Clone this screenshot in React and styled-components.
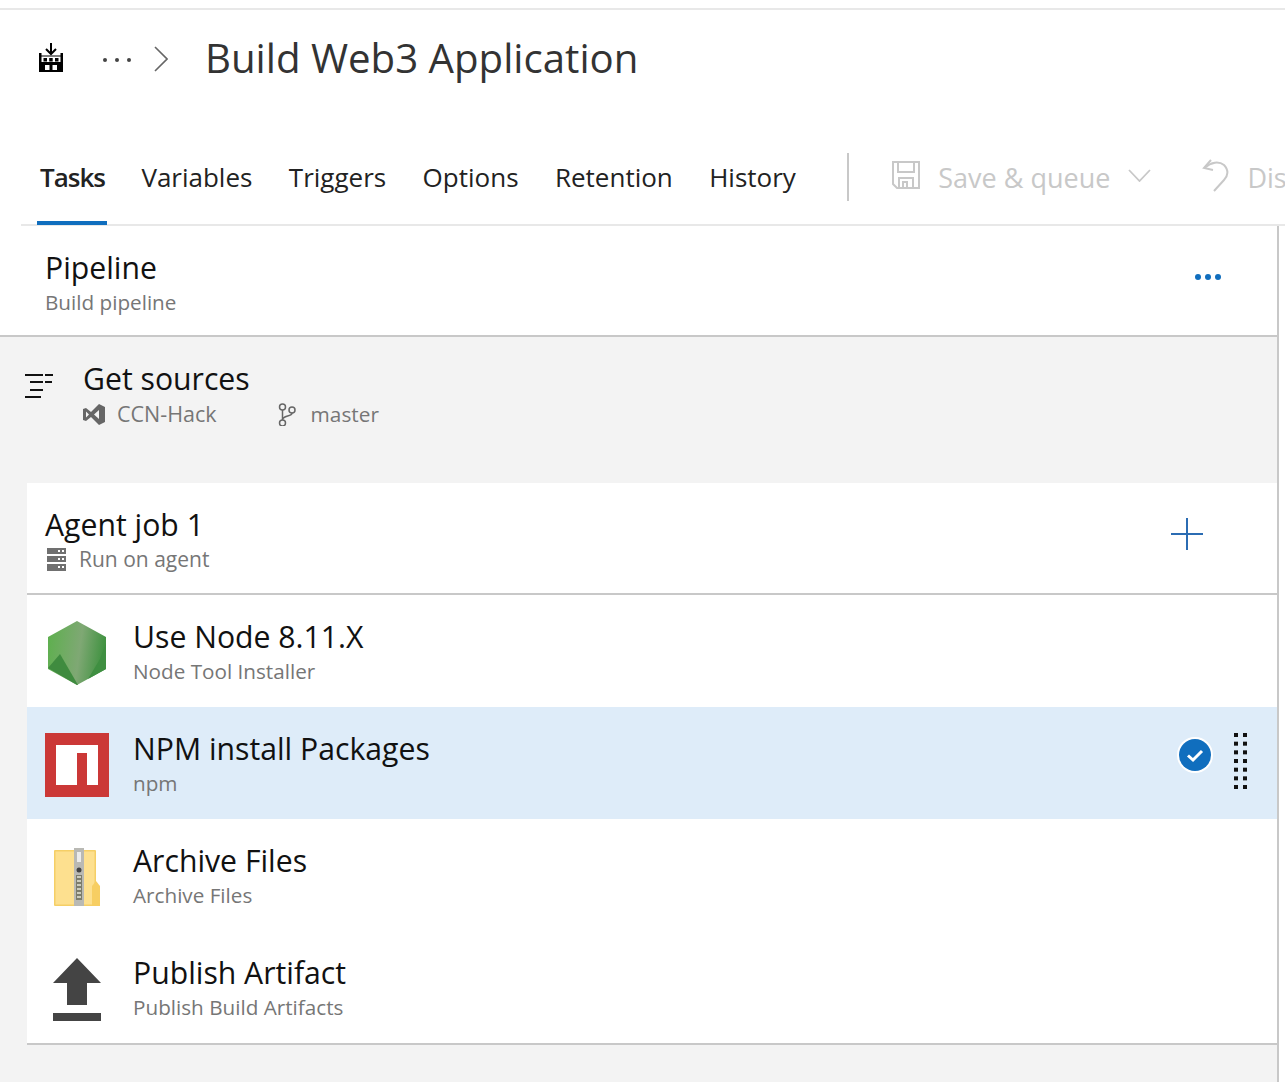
import * as React from "react";
import styled, { createGlobalStyle } from "styled-components";

const GlobalStyle = createGlobalStyle`
  html, body {
    margin: 0;
    padding: 0;
    background: #ffffff;
    overflow: hidden;
  }
  body {
    font-family: "Open Sans", "Noto Sans", "Liberation Sans", sans-serif;
  }
`;

const Page = styled.div`
  width: 1285px;
  height: 1082px;
  overflow: hidden;
  padding-top: 8px;
  box-sizing: border-box;
`;

const TopRule = styled.div`
  height: 2px;
  background: #e8e8e8;
`;

const Header = styled.div`
  display: flex;
  align-items: center;
  height: 98px;
  padding-left: 39px;
`;

const BuildMark = styled.div`
  display: flex;
  margin-bottom: 3px;
`;

const Ellipsis = styled.div`
  display: flex;
  gap: 8px;
  margin: 1px 23px 0 40px;
`;

const GreyDot = styled.span`
  width: 4px;
  height: 4px;
  border-radius: 50%;
  background: #444444;
`;

const Title = styled.h1`
  margin: 0 0 4px 37px;
  font-size: 40.2px;
  font-weight: 400;
  color: #333333;
  white-space: nowrap;
`;

const TabBar = styled.div`
  display: flex;
  align-items: center;
  height: 116px;
  margin-left: 21px;
  padding-left: 19px;
  border-bottom: 2px solid #e8e8e8;
  white-space: nowrap;
`;

const Tab = styled.div`
  position: relative;
  top: 11px;
  flex: none;
  margin-right: 36.4px;
  font-size: 26px;
  letter-spacing: ${(p) => (p.$active ? "-1px" : "0")};
  font-weight: ${(p) => (p.$active ? 600 : 400)};
  color: #222222;

  ${(p) =>
    p.$active &&
    `
    &::after {
      content: "";
      position: absolute;
      left: -3px;
      right: -2px;
      bottom: -30px;
      height: 4px;
      background: #106ebe;
    }
  `}
`;

const Separator = styled.div`
  flex: none;
  width: 2px;
  height: 48px;
  background: #c8c8c8;
  margin: 22px 43px 0 15px;
`;

const Command = styled.div`
  position: relative;
  top: 11px;
  flex: none;
  display: flex;
  align-items: center;
  gap: 18px;
  margin-right: 51px;
  font-size: 27px;
  color: #c8c8c8;
`;

const CommandIcon = styled.span`
  display: flex;
  margin-bottom: 4px;
`;

const Panel = styled.div`
  width: 1279px;
  height: 856px;
  box-sizing: border-box;
  border-right: 2px solid #c8c8c8;
  background: #f3f3f3;
`;

const PipelineRow = styled.div`
  display: flex;
  align-items: center;
  justify-content: space-between;
  height: 106px;
  padding: 3px 56px 0 45px;
  background: #ffffff;
  border-bottom: 2px solid #c8c8c8;
`;

const Stack = styled.div`
  display: flex;
  flex-direction: column;
`;

const RowTitle = styled.div`
  font-size: 30.2px;
  line-height: 40px;
  color: #111111;
  white-space: nowrap;
`;

const RowSub = styled.div`
  font-size: 20.7px;
  line-height: 28px;
  color: #767676;
  white-space: nowrap;
`;

const Dots = styled.div`
  display: flex;
  gap: 4px;
  margin-bottom: 11px;
`;

const BlueDot = styled.span`
  width: 6px;
  height: 6px;
  border-radius: 50%;
  background: #106ebe;
`;

const Sources = styled.div`
  display: flex;
  gap: 30px;
  height: 146px;
  padding: 22px 0 0 25px;
  box-sizing: border-box;
`;

const SourcesIcon = styled.div`
  padding-top: 15px;
`;

const SourceMeta = styled.div`
  display: flex;
  align-items: center;
  margin-top: 1px;
  font-size: 21.4px;
  line-height: 28px;
  color: #767676;
`;

const MetaItem = styled.span`
  display: flex;
  align-items: center;
  gap: ${(p) => p.$gap}px;
  margin-right: ${(p) => p.$after}px;
  font-size: ${(p) => p.$size}px;
`;

const Card = styled.div`
  margin-left: 27px;
  background: #ffffff;
  border-bottom: 2px solid #c8c8c8;
`;

const AgentRow = styled.div`
  display: flex;
  align-items: center;
  justify-content: space-between;
  height: 108px;
  padding: 2px 74px 0 18px;
  border-bottom: 2px solid #c8c8c8;
`;

const AgentMeta = styled.div`
  display: flex;
  align-items: center;
  gap: 13px;
  padding-left: 2px;
  font-size: 21px;
  line-height: 28px;
  color: #767676;
`;

const PlusWrap = styled.div`
  display: flex;
  margin-bottom: 10px;
`;

const TaskRow = styled.div`
  display: flex;
  align-items: center;
  height: 112px;
  padding-right: 30px;
  background: ${(p) => (p.$selected ? "#deecf9" : "#ffffff")};
`;

const TaskIcon = styled.div`
  display: flex;
  align-items: center;
  justify-content: center;
  flex: none;
  width: 100px;
  height: 100%;
  margin-right: 6px;
  padding-top: 4px;
  box-sizing: border-box;
`;

const TaskActions = styled.div`
  display: flex;
  align-items: flex-start;
  align-self: flex-start;
  gap: 21px;
  margin-left: auto;
  padding-top: 26px;
`;

const BadgeWrap = styled.div`
  display: flex;
  margin-top: 4px;
`;

const NodeIcon = () => (
  <svg width="58" height="64" viewBox="0 0 58 64">
    <defs>
      <linearGradient id="nodeFill" x1="0" y1="0" x2="1" y2="0.15">
        <stop offset="0" stopColor="#5cb04c" />
        <stop offset="0.6" stopColor="#7fa874" />
        <stop offset="1" stopColor="#439343" />
      </linearGradient>
    </defs>
    <polygon points="29,0 58,16 58,48 29,64 0,48 0,16" fill="url(#nodeFill)" />
    <polygon points="0,47 12,33 30,64 29,64" fill="#3f8b3f" />
    <polygon points="58,22 58,48 40,58 52,38" fill="#3f8f41" />
  </svg>
);

const NpmIcon = () => (
  <svg width="64" height="64" viewBox="0 0 64 64">
    <rect width="64" height="64" fill="#cb3837" />
    <polygon points="11,12 53,12 53,52 42,52 42,20 32,20 32,52 11,52" fill="#ffffff" />
  </svg>
);

const ZipIcon = () => (
  <svg width="46" height="58" viewBox="0 0 46 58">
    <rect x="0" y="2" width="42" height="56" rx="1" fill="#f5cf66" />
    <rect x="1.5" y="3.5" width="39" height="53" fill="#fde08f" />
    <path d="M38 42 L38 38 L42 33 L46 38 L46 58 L38 58 Z" fill="#f7ce62" />
    <rect x="20" y="0" width="10" height="58" fill="#b9b9b4" />
    <rect x="23" y="4" width="4" height="10" fill="#ececec" />
    <circle cx="25" cy="22" r="2.5" fill="#444444" />
    <rect x="22" y="27" width="6" height="25" fill="#7c7c6c" />
    <path d="M23 29h4M23 33h4M23 37h4M23 41h4M23 45h4M23 49h4" stroke="#e6e6d8" strokeWidth="1.5" />
  </svg>
);

const UploadIcon = () => (
  <svg width="48" height="63" viewBox="0 0 48 63">
    <polygon points="24,0 48,25 34,25 34,47 14,47 14,25 0,25" fill="#444444" />
    <rect x="0" y="55" width="48" height="8" fill="#444444" />
  </svg>
);

const BuildIcon = () => (
  <svg width="24" height="29" viewBox="0 0 24 29">
    <path d="M12 0v11M7 6l5 5 5-5" stroke="#000000" strokeWidth="2" fill="none" />
    <rect x="0" y="10" width="2.5" height="19" fill="#000000" />
    <rect x="21.5" y="10" width="2.5" height="19" fill="#000000" />
    <rect x="2" y="12.5" width="20" height="1" fill="#000000" />
    <rect x="4.5" y="15" width="3.5" height="3.5" fill="#000000" />
    <rect x="10.2" y="15" width="3.5" height="3.5" fill="#000000" />
    <rect x="16" y="15" width="3.5" height="3.5" fill="#000000" />
    <path fillRule="evenodd" d="M0 19h24v10H0z M6 22v5h4.5v-5z M13.5 22v5h4.5v-5z" fill="#000000" />
  </svg>
);

const Chevron = () => (
  <svg width="14" height="26" viewBox="0 0 14 26">
    <path d="M1 1l12 12L1 25" stroke="#666666" strokeWidth="1.6" fill="none" />
  </svg>
);

const SaveIcon = () => (
  <svg width="28" height="28" viewBox="0 0 28 28" fill="none" stroke="#c8c8c8" strokeWidth="2">
    <path d="M1 1h26v26H5l-4-4z" />
    <path d="M6 1v10h16V1M7 27V17h14v10M11 27v-6h4v6" />
  </svg>
);

const ChevronDown = () => (
  <svg width="23" height="13" viewBox="0 0 23 13">
    <path d="M1 1l10.5 11L22 1" stroke="#c8c8c8" strokeWidth="1.8" fill="none" />
  </svg>
);

const UndoIcon = () => (
  <svg width="27" height="33" viewBox="0 0 27 33" fill="none" stroke="#c8c8c8" strokeWidth="2">
    <path d="M9 1L2 9l9 2" />
    <path d="M3 8.5C9 3 17 2 22 6c5 5 4 11 0 15l-10 11" />
  </svg>
);

const SourcesGlyph = () => (
  <svg width="28" height="24" viewBox="0 0 28 24" stroke="#111111" strokeWidth="2">
    <path d="M0 1h18M20 1h8M5 8h13M20 8h7M5 16h13M0 23h16" />
  </svg>
);

const RepoIcon = () => (
  <svg width="22" height="21" viewBox="0 0 22 21">
    <path
      fillRule="evenodd"
      d="M16 0l6 3v15l-6 3-8-8-5 4-3-1V5l3-1 5 4zM3 7.5v6l3-3zM16 6l-5 4.5 5 4.500z"
      fill="#666666"
    />
  </svg>
);

const BranchIcon = () => (
  <svg width="18" height="23" viewBox="0 0 18 23" fill="none" stroke="#666666" strokeWidth="1.5">
    <circle cx="4.5" cy="4" r="3" />
    <circle cx="4.5" cy="20" r="3" />
    <circle cx="14" cy="7" r="3" />
    <path d="M4.5 7v10M14 10c0 4-9.5 2-9.5 7" />
  </svg>
);

const ServerIcon = () => (
  <svg width="19" height="23" viewBox="0 0 19 23">
    <path
      fillRule="evenodd"
      d="M0 0h19v6H0z M0 8h19v6H0z M0 16h19v7H0z M11 2v2h2V2z M15 2v2h2V2z M11 10v2h2v-2z M15 10v2h2v-2z M11 18v2h2v-2z M15 18v2h2v-2z"
      fill="#707070"
    />
  </svg>
);

const PlusIcon = () => (
  <svg width="32" height="32" viewBox="0 0 32 32">
    <path d="M16 0v32M0 16h32" stroke="#2b6cb3" strokeWidth="2" />
  </svg>
);

const CheckBadge = () => (
  <svg width="36" height="36" viewBox="0 0 36 36">
    <circle cx="18" cy="18" r="18" fill="#ffffff" />
    <circle cx="18" cy="18" r="16" fill="#106ebe" />
    <path d="M11 18.5l5 4.5 9-9" stroke="#ffffff" strokeWidth="3" fill="none" />
  </svg>
);

const DragHandle = () => (
  <svg width="13" height="56" viewBox="0 0 13 56">
    {[0, 1, 2, 3, 4, 5, 6].map((i) => (
      <g key={i} fill="#111111">
        <rect x="0" y={i * 8.67} width="4" height="4" />
        <rect x="9" y={i * 8.67} width="4" height="4" />
      </g>
    ))}
  </svg>
);

const tasks = [
  { title: "Use Node 8.11.X", sub: "Node Tool Installer", icon: <NodeIcon /> },
  { title: "NPM install Packages", sub: "npm", icon: <NpmIcon />, selected: true },
  { title: "Archive Files", sub: "Archive Files", icon: <ZipIcon /> },
  { title: "Publish Artifact", sub: "Publish Build Artifacts", icon: <UploadIcon /> },
];

const tabs = ["Tasks", "Variables", "Triggers", "Options", "Retention", "History"];

export default function App() {
  return (
    <Page>
      <GlobalStyle />
      <TopRule />
      <Header>
        <BuildMark>
          <BuildIcon />
        </BuildMark>
        <Ellipsis>
          <GreyDot />
          <GreyDot />
          <GreyDot />
        </Ellipsis>
        <Chevron />
        <Title>Build Web3 Application</Title>
      </Header>
      <TabBar>
        {tabs.map((t) => (
          <Tab key={t} $active={t === "Tasks"}>
            {t}
          </Tab>
        ))}
        <Separator />
        <Command>
          <CommandIcon>
            <SaveIcon />
          </CommandIcon>
          Save &amp; queue
          <CommandIcon>
            <ChevronDown />
          </CommandIcon>
        </Command>
        <Command>
          <CommandIcon>
            <UndoIcon />
          </CommandIcon>
          Discard
        </Command>
      </TabBar>
      <Panel>
        <PipelineRow>
          <Stack>
            <RowTitle>Pipeline</RowTitle>
            <RowSub>Build pipeline</RowSub>
          </Stack>
          <Dots>
            <BlueDot />
            <BlueDot />
            <BlueDot />
          </Dots>
        </PipelineRow>
        <Sources>
          <SourcesIcon>
            <SourcesGlyph />
          </SourcesIcon>
          <Stack>
            <RowTitle>Get sources</RowTitle>
            <SourceMeta>
              <MetaItem $gap={12} $after={61} $size={21.5}>
                <RepoIcon />
                CCN-Hack
              </MetaItem>
              <MetaItem $gap={15} $after={0} $size={20.8}>
                <BranchIcon />
                master
              </MetaItem>
            </SourceMeta>
          </Stack>
        </Sources>
        <Card>
          <AgentRow>
            <Stack>
              <RowTitle>Agent job 1</RowTitle>
              <AgentMeta>
                <ServerIcon />
                Run on agent
              </AgentMeta>
            </Stack>
            <PlusWrap>
              <PlusIcon />
            </PlusWrap>
          </AgentRow>
          {tasks.map((t) => (
            <TaskRow key={t.title} $selected={t.selected}>
              <TaskIcon>{t.icon}</TaskIcon>
              <Stack>
                <RowTitle>{t.title}</RowTitle>
                <RowSub>{t.sub}</RowSub>
              </Stack>
              {t.selected && (
                <TaskActions>
                  <BadgeWrap>
                    <CheckBadge />
                  </BadgeWrap>
                  <DragHandle />
                </TaskActions>
              )}
            </TaskRow>
          ))}
        </Card>
      </Panel>
    </Page>
  );
}
